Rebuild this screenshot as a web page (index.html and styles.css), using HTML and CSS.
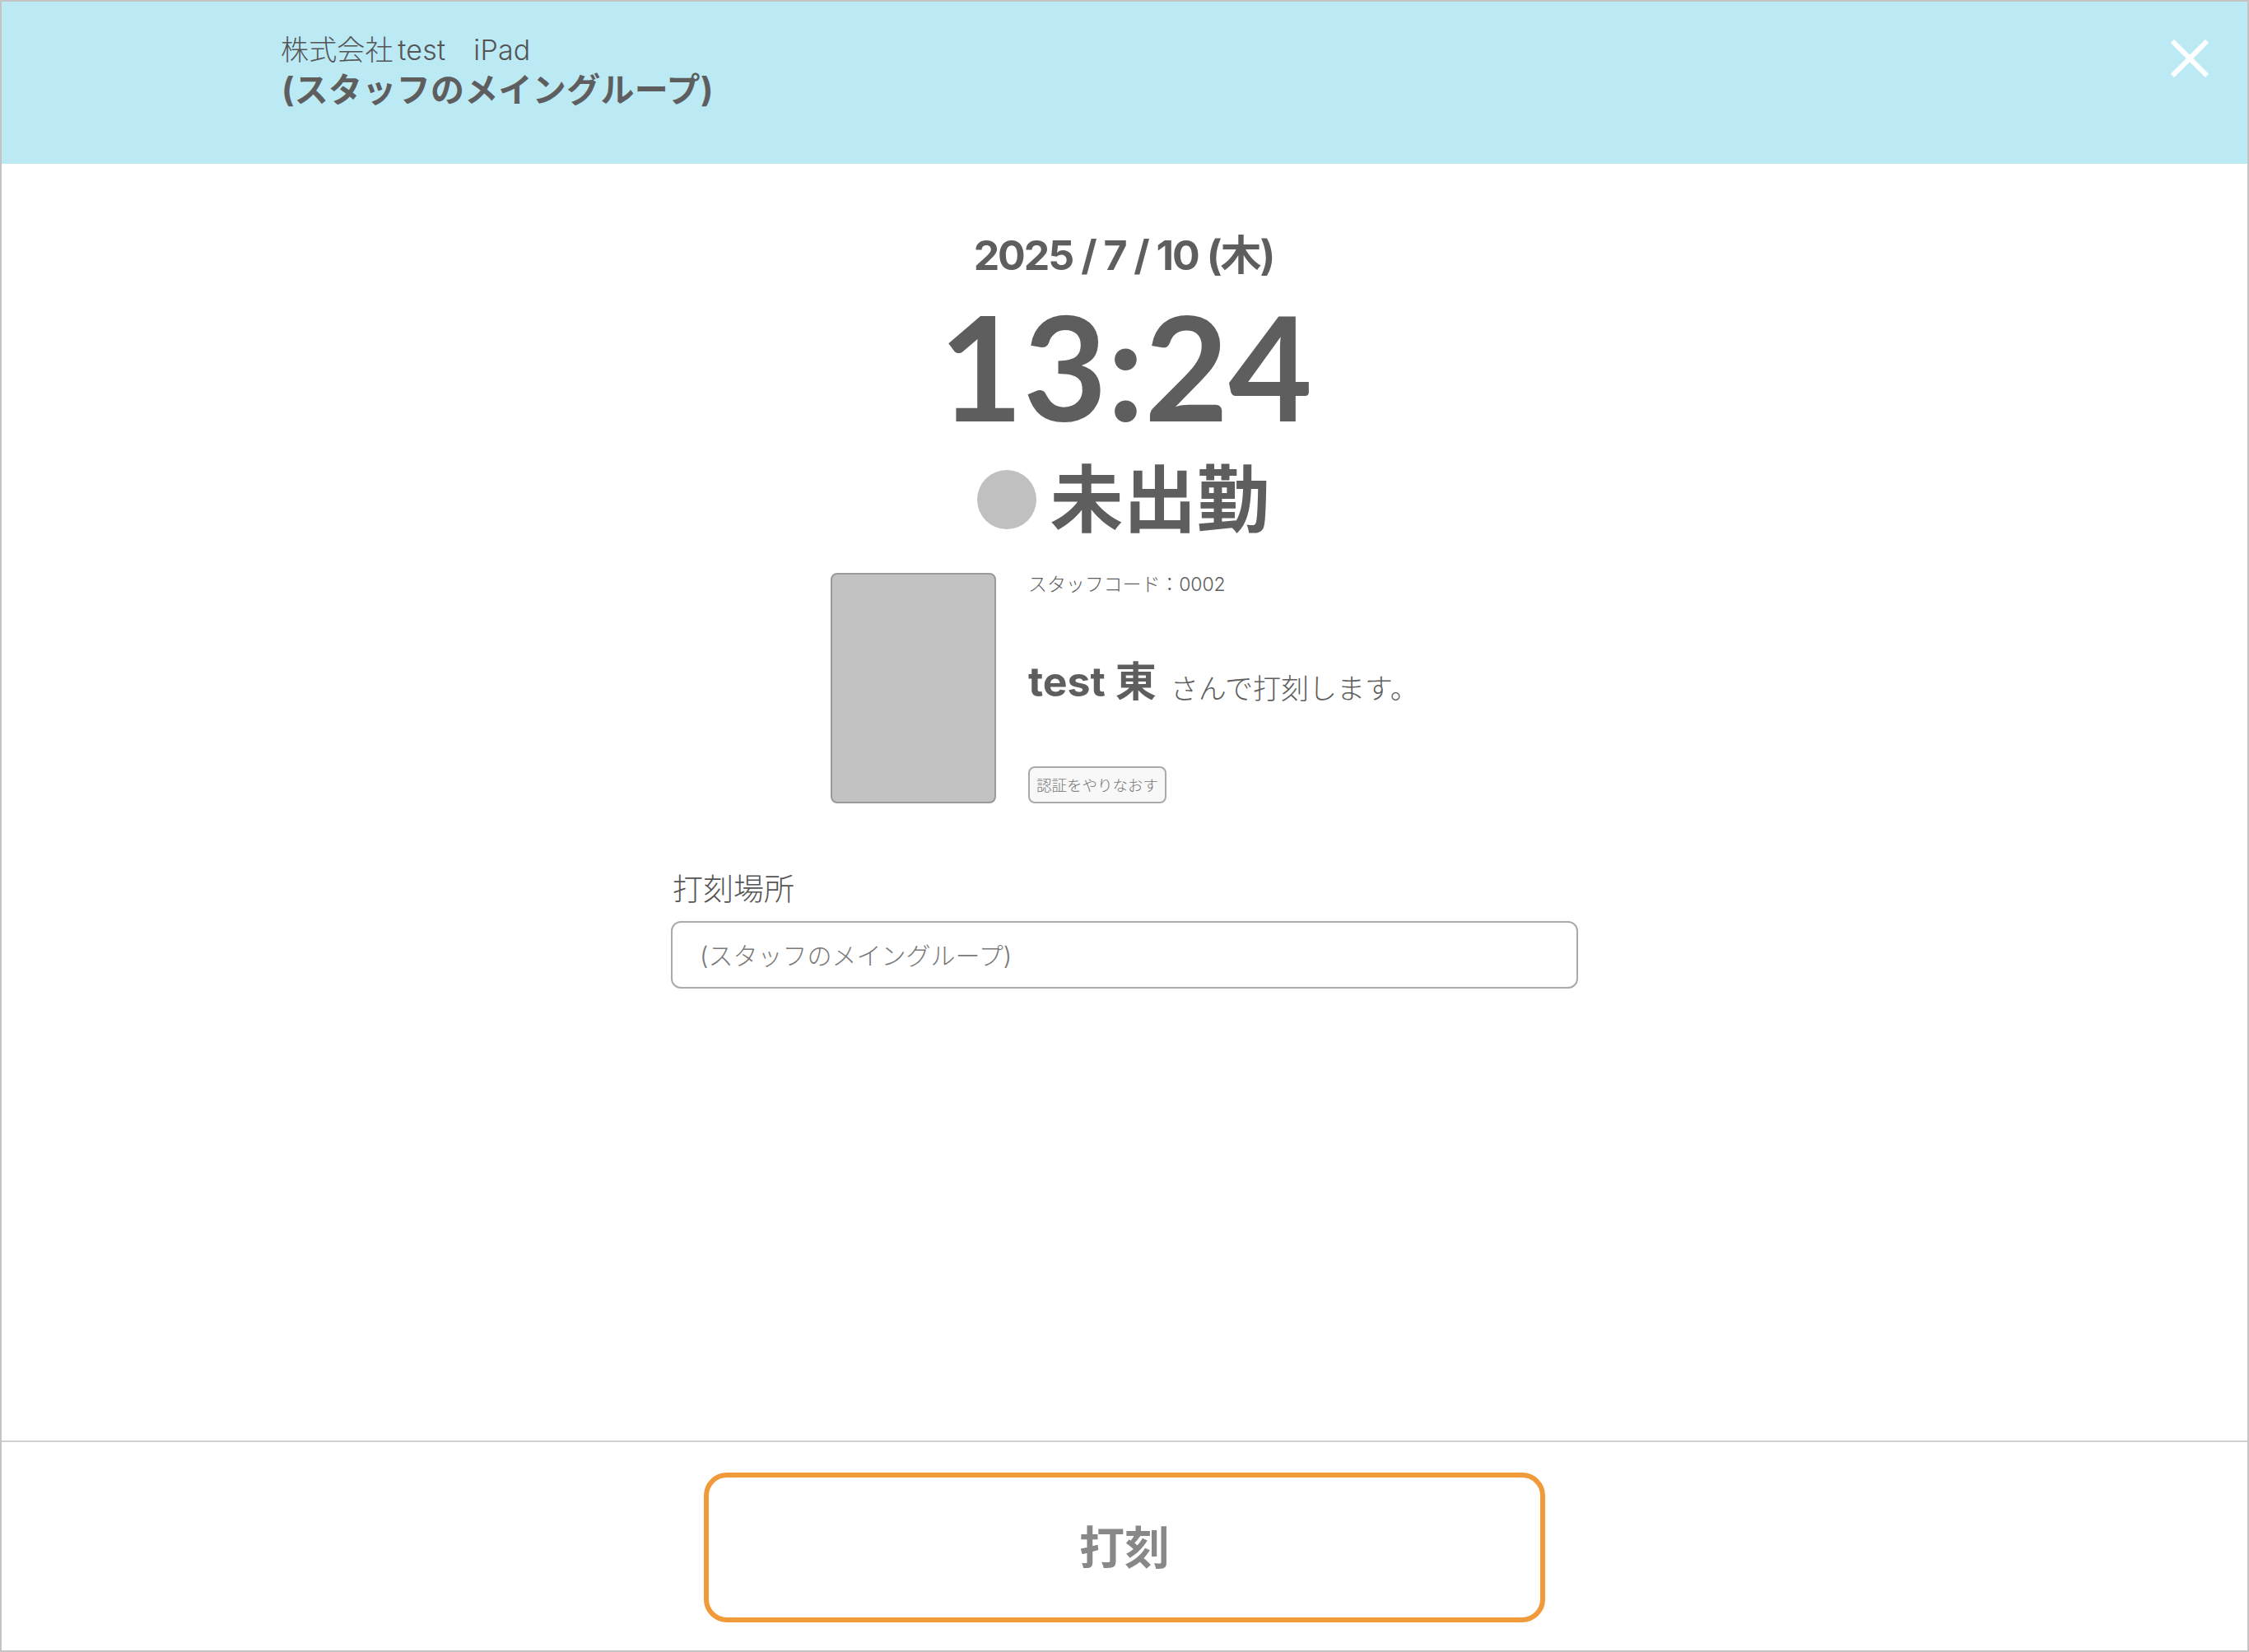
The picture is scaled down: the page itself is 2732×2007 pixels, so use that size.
FILE: index.html
```html
<!DOCTYPE html>
<html lang="ja">
<head>
<meta charset="utf-8">
<title>打刻</title>
<link rel="stylesheet" href="styles.css">
</head>
<body>
<div class="frame">
  <header class="header">
    <div class="header-text">
      <div class="company">株式会社 test　iPad</div>
      <div class="group">(スタッフのメイングループ)</div>
    </div>
    <button class="close" aria-label="閉じる">
      <svg class="close-icon" viewBox="0 0 46 46"><path d="M2 2 L44 44 M44 2 L2 44"/></svg>
    </button>
  </header>
  <main class="main">
    <div class="date">2025 / 7 / 10 (木)</div>
    <div class="time">13:24</div>
    <div class="status"><span class="dot"></span><span class="status-text">未出勤</span></div>
    <div class="staff">
      <div class="photo"></div>
      <div class="staff-info">
        <div class="code">スタッフコード：0002</div>
        <div class="name-line"><span class="name">test 東</span><span class="suffix">さんで打刻します。</span></div>
        <button class="redo">認証をやりなおす</button>
      </div>
    </div>
    <div class="place">
      <div class="place-label">打刻場所</div>
      <div class="place-input">(スタッフのメイングループ)</div>
    </div>
  </main>
  <footer class="footer">
    <button class="punch">打刻</button>
  </footer>
</div>
</body>
</html>
```
FILE: styles.css
```css
* { box-sizing: border-box; }
html, body { margin: 0; height: 100%; }
body {
  font-family: "Inter", "Noto Sans CJK JP", sans-serif;
  color: #5e5e5e;
  background: #fff;
}
button { font-family: inherit; }
.frame {
  height: 2007px;
  border: 2px solid #c4c4c4;
  display: flex;
  flex-direction: column;
}
.header {
  height: 197px;
  flex: none;
  background: #bbeaf5;
  display: flex;
  justify-content: space-between;
  align-items: flex-start;
  padding: 36px 47px 0 339px;
}
.company { font-size: 34px; line-height: 46px; font-weight: 300; word-spacing: -4px; letter-spacing: 0.15px; color: #555; }
.group { font-size: 41px; line-height: 50px; font-weight: 700; letter-spacing: 0.3px; margin-left: 1px; }
.close {
  border: 0;
  background: none;
  padding: 0;
  margin-top: 10px;
  width: 46px;
  height: 46px;
}
.close-icon { display: block; width: 46px; height: 46px; fill: none; stroke: #fff; stroke-width: 6; }
.main {
  flex: 1;
  display: flex;
  flex-direction: column;
  align-items: center;
  padding-top: 76px;
}
.date { font-size: 50px; line-height: 70px; font-weight: 700; letter-spacing: -2px; margin-left: -2px; }
.time {
  font-family: "Lato", sans-serif;
  font-weight: 700;
  font-size: 176px;
  line-height: 200px;
  margin-top: -1px;
  margin-left: 3px;
}
.status { display: flex; align-items: center; gap: 17px; margin: 13px 0 0 -3px; height: 100px; }
.dot { width: 72px; height: 72px; border-radius: 50%; background: #c0c0c0; }
.status-text { font-size: 89px; line-height: 100px; font-weight: 700; }
.staff { display: flex; gap: 39px; margin-top: 39px; width: 714px; }
.photo {
  width: 201px;
  height: 280px;
  background: #c2c2c2;
  border: 2px solid #999;
  border-radius: 8px;
  flex: none;
}
.staff-info { display: flex; flex-direction: column; justify-content: space-between; align-items: flex-start; height: 280px; }
.code { font-size: 23px; line-height: 28px; color: #5e5e5e; font-weight: 300; letter-spacing: -0.1px; }
.name-line { display: flex; align-items: flex-end; gap: 17px; white-space: nowrap; }
.name { font-size: 50px; font-weight: 700; line-height: 60px; }
.suffix { font-size: 34px; font-weight: 300; color: #5e5e5e; line-height: 42px; }
.redo {
  width: 168px;
  height: 45px;
  padding: 0 0 2px;
  border: 2px solid #aaa;
  border-radius: 8px;
  background: #f8f8f8;
  color: #777;
  font-size: 18.5px;
  font-weight: 300;
  white-space: nowrap;
}
.place { width: 1102px; margin-top: 80px; }
.place-label { font-size: 37px; line-height: 50px; font-weight: 300; padding-left: 2px; color: #555; }
.place-input {
  margin-top: 13px;
  height: 82px;
  border: 2px solid #aaa;
  border-radius: 12px;
  padding: 0 33px 2px;
  display: flex;
  align-items: center;
  color: #7a7a7a;
  font-size: 30px;
  font-weight: 300;
}
.footer {
  height: 255px;
  flex: none;
  border-top: 2px solid #d0d0d0;
  display: flex;
  justify-content: center;
  padding-top: 37px;
}
.punch {
  width: 1022px;
  height: 182px;
  border: 6px solid #f09a3a;
  border-radius: 28px;
  background: #fff;
  color: #888;
  font-size: 55px;
  font-weight: 700;
  padding: 0 0 8px;
}
```
